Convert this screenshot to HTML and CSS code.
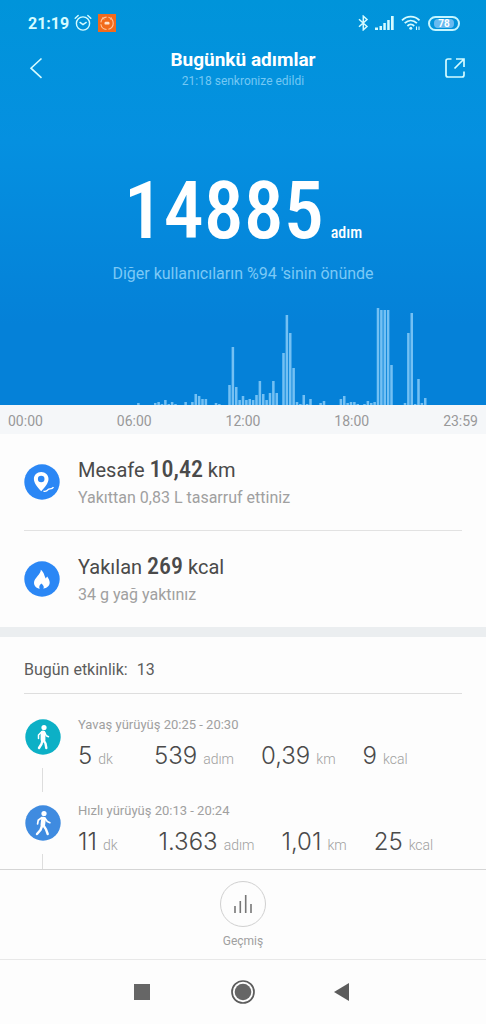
FILE: index.html
```html
<!DOCTYPE html>
<html lang="tr">
<head>
<meta charset="utf-8">
<meta name="viewport" content="width=device-width, initial-scale=1">
<title>Bugünkü adımlar</title>
<link rel="stylesheet" href="styles.css">
</head>
<body>
<div class="app">
  <section class="hero">
    <div class="status">
      <span class="clock">21:19</span>
      <svg class="alarm" width="18" height="18" viewBox="0 0 18 18" fill="none" stroke="currentColor" stroke-width="1.4" stroke-linecap="round"><circle cx="9" cy="9.5" r="6.6"/><path d="M1.2 4.2 4.2 1.5M16.8 4.2 13.8 1.5M6 8.4l3 2.2 3.2-2.2"/></svg>
      <svg width="18" height="18" viewBox="0 0 18 18" fill="none"><path fill="#f26a1b" d="M0 0h18v18H0z"/><circle cx="9" cy="9.3" r="6.2" stroke="#ffc49a" stroke-width="1.1" stroke-dasharray="8 2"/><rect x="6.500" y="7.800" width="5" height="2.800" rx="1.2" fill="#ffe3cf"/><path d="M4.500 3.500l1.500 2M13.500 3.500l-1 2" stroke="#ffc49a"/></svg>
      <span class="spacer"></span>
      <svg width="11" height="16" viewBox="0 0 11 16" fill="none" stroke="currentColor" stroke-width="1.500"><path d="M1 4.300 9 11.500 5.300 14.800V1.200L9 4.500 1 11.700"/></svg>
      <svg class="signal" width="19" height="14" viewBox="0 0 19 14" fill="currentColor"><path d="M0 11.500h3V14H0zM4.500 10H7v4H4.500zM8.300 7h2.500v7H8.300zM12.200 4h2.500v10h-2.500zM16 0h2.700v14H16z"/></svg>
      <svg class="wifi" width="20" height="16" viewBox="0 0 20 16" fill="none" stroke="currentColor" stroke-width="1.800"><path d="M1 5.300c5-5 12.500-5 17.500 0M3.700 8.200c3.700-3.500 8.500-3.500 12.200 0M6.400 11c2-2 4.800-2 6.800 0"/><circle cx="9.800" cy="13.300" r="1.500" fill="currentColor" stroke="none"/><path d="M15.500 11.500V15M18 11.500V15" stroke-width="1.100"/></svg>
      <span class="battery"><span class="level">78</span></span>
    </div>
    <header class="header">
      <button class="icon-btn" type="button" aria-label="Geri"><svg width="14" height="22" viewBox="0 0 14 22" fill="none" stroke="currentColor" stroke-width="1.600"><path d="M12.500 1.500 2 11.200l10.500 9.600"/></svg></button>
      <div class="titles"><h1>Bugünkü adımlar</h1><p>21:18 senkronize edildi</p></div>
      <button class="icon-btn right" type="button" aria-label="Paylaş"><svg width="22" height="22" viewBox="0 0 22 22" fill="none" stroke="currentColor" stroke-width="1.700"><path d="M7.500 2H4Q2 2 2 4v14q0 2 2 2h14q2 0 2-2v-3.500M12 2h8v8M20 2 10.500 11.500"/></svg></button>
    </header>
    <div class="total"><span class="count">14885</span><span class="unit">adım</span></div>
    <p class="rank">Diğer kullanıcıların %94 'sinin önünde</p>
    <svg class="chart" viewBox="0 0 144 97" preserveAspectRatio="none" role="img" aria-label="Günlük adım grafiği"><path d="M41 97v-2M46 97v-2M47 97v-3M48 97v-1M49 97v-5M50 97v-1M51 97v-3M52 97v-1M55 97v-3M57 97v-3M58 97v-11M59 97v-9M60 97v-6M61 97v-6M64 97v-2M65 97v-1M68 97v-20M69 97v-58M70 97v-18M71 97v-5M72 97v-9M73 97v-5M74 97v-6M75 97v-5M76 97v-10M77 97v-24M78 97v-11M79 97v-5M80 97v-12M81 97v-24M82 97v-12M84 97v-52M85 97v-90M86 97v-72M87 97v-37M88 97v-3M89 97v-1M90 97v-10M91 97v-1M92 97v-6M95 97v-2M96 97v-4M101 97v-6M102 97v-9M103 97v-2M104 97v-3M105 97v-3M106 97v-1M108 97v-1M109 97v-4M110 97v-2M111 97v-3M112 97v-97M113 97v-95M114 97v-95M115 97v-95M116 97v-40M120 97v-2M121 97v-72M122 97v-92M123 97v-1M124 97v-26M125 97v-2M126 97v-7"/></svg>
  </section>
  <div class="axis"><span>00:00</span><span>06:00</span><span>12:00</span><span>18:00</span><span>23:59</span></div>

  <section class="stats">
    <article class="stat">
      <svg class="badge" viewBox="0 0 36 36"><circle cx="18" cy="18" r="17.700" fill="#2b87f5"/><path fill="#fff" fill-rule="evenodd" d="M17.200 8c-4.200 0-7.300 3.100-7.300 7 0 4.200 3.700 8.200 7.300 12.300 3.600-4.100 7.300-8.100 7.300-12.300 0-3.900-3.100-7-7.300-7zm0 3.700a3.300 3.300 0 1 1 0 6.600 3.300 3.300 0 0 1 0-6.600z"/><path d="M19.500 27.300c2.500.4 3.700-.3 4.500-1.600 1.200-1.800 3.500.3 5.500-2.500" fill="none" stroke="#fff" stroke-width="1.400"/></svg>
      <div class="stat-text"><h2>Mesafe <b>10,42</b> km</h2><p>Yakıttan 0,83 L tasarruf ettiniz</p></div>
    </article>
    <article class="stat">
      <svg class="badge" viewBox="0 0 36 36"><circle cx="18" cy="18" r="17.700" fill="#2b87f5"/><path fill="#fff" d="M16.800 8.700c.5 4-6.800 8.300-6.800 13 0 3 2.200 5.500 5.900 6-1.500-2.200.1-4 1.500-5.200 1.400 1.300 3.300 3 1.900 5.200 3.900-.4 6.400-3 6.400-6.100 0-2.500-1.400-4.300-2.400-6.200-.8.600-1.200 1.300-1.500 2.100-1.500-2.300-1.500-6.200-5-8.800z"/></svg>
      <div class="stat-text"><h2>Yakılan <b>269</b> kcal</h2><p>34 g yağ yaktınız</p></div>
    </article>
  </section>

  <section class="activities">
    <h3>Bugün etkinlik: <span>13</span></h3>
    <ol>
      <li>
        <svg class="badge" viewBox="0 0 36 36"><circle cx="18" cy="18" r="17.700" fill="#0cb0c6"/><circle cx="19" cy="8.500" r="2.600" fill="#fff"/><path fill="none" stroke="#fff" stroke-linecap="round" d="M18 14v7" stroke-width="4.800"/><path fill="none" stroke="#fff" stroke-width="2.400" stroke-linecap="round" stroke-linejoin="round" d="M17.500 21l-1 4-2.500 4M18.500 21l2 3.500.8 4.500"/><path fill="none" stroke="#fff" stroke-width="1.500" stroke-linecap="round" stroke-linejoin="round" d="M16.500 13l-3 3v3.500M19.500 13l1.800 3.800 2.200 1"/></svg>
        <div class="detail"><p>Yavaş yürüyüş 20:25 - 20:30</p>
        <div class="metrics"><span><b>5</b>dk</span><span><b>539</b>adım</span><span><b>0,39</b>km</span><span><b>9</b>kcal</span></div></div>
      </li>
      <li>
        <svg class="badge" viewBox="0 0 36 36"><circle cx="18" cy="18" r="17.700" fill="#3f8be0"/><circle cx="19" cy="8.500" r="2.600" fill="#fff"/><path fill="none" stroke="#fff" stroke-linecap="round" d="M18.500 14l-.7 6" stroke-width="4.600"/><path fill="none" stroke="#fff" stroke-width="2.400" stroke-linecap="round" stroke-linejoin="round" d="M17 21l-1.500 4-3.500 4M18.500 20.500l2.500 3.800 1.700 4.700"/><path fill="none" stroke="#fff" stroke-width="1.700" stroke-linecap="round" stroke-linejoin="round" d="M17 12.500l-3.800 2.800-.6 3.500M19.800 13l2.500 3.500 2.600 1.200"/></svg>
        <div class="detail"><p>Hızlı yürüyüş 20:13 - 20:24</p>
        <div class="metrics"><span><b>11</b>dk</span><span><b>1.363</b>adım</span><span><b>1,01</b>km</span><span><b>25</b>kcal</span></div></div>
      </li>
    </ol>
  </section>

  <footer class="history">
    <button type="button"><span class="ring"><svg width="20" height="20" viewBox="0 0 20 20" fill="none" stroke="#777" stroke-width="1.600"><path d="M2 19v-7M7.300 19V7M12.700 19V1M18 19v-9"/></svg></span>Geçmiş</button>
  </footer>
  <nav class="system">
    <button type="button" aria-label="Son uygulamalar"><svg width="24" height="24" viewBox="0 0 24 24"><path fill="#666" d="M3 4h16v16H3z"/></svg></button>
    <button type="button" aria-label="Ana ekran"><svg width="24" height="24" viewBox="0 0 24 24"><circle cx="12" cy="12" r="11" fill="none" stroke="#5c5c5c" stroke-width="1.700"/><circle cx="12" cy="12" r="8.300" fill="#666"/></svg></button>
    <button type="button" aria-label="Geri"><svg width="24" height="24" viewBox="0 0 24 24"><path fill="#5c5c5c" d="M3 12 18 3v18z"/></svg></button>
  </nav>
</div>
</body>
</html>
```
FILE: styles.css
```css
* { box-sizing: border-box; }
body, h1, h2, h3, p, ol { margin: 0; padding: 0; }
body { font-family: Roboto, "Noto Sans", sans-serif; color: #4a4a4a; background: #fdfdfd; }
button { border: 0; padding: 0; background: none; color: inherit; font: inherit; }
svg { display: block; flex: none; }

.app { display: flex; flex-direction: column; min-height: 100vh; }

.hero { flex: none; background: linear-gradient(#0094da, #0590e0 35%, #0581d8 80%); color: #fff; }
.status { display: flex; align-items: center; height: 46px; padding: 0 26px 0 28px; color: #d5fbff; }
.clock { font-size: 16px; font-weight: 700; }
.alarm { margin: 0 6px 0 5px; }
.spacer { flex: 1; }
.signal { margin: 0 7px 0 6px; }
.wifi { margin-right: 7px; }
.battery { width: 32px; height: 15px; padding: 1px; border: 2px solid #c4f5ff; border-radius: 8px; }
.level { display: block; width: 20px; margin: 0 auto; border-radius: 4px; background: #68baf0; color: #fff; font-size: 10px; font-weight: 700; line-height: 9px; text-align: center; }

.header { display: grid; grid-template-columns: 36px 1fr 36px; align-items: center; height: 44px; padding: 0 20px; }
.icon-btn { display: flex; width: 32px; padding-left: 9px; color: #d5fbff; }
.right { justify-self: end; justify-content: flex-end; padding: 0; }
.titles { text-align: center; }
.titles h1 { font-size: 19px; font-weight: 700; line-height: 25px; }
.titles p { color: #74c8f4; font-size: 12px; line-height: 18px; }

.total { display: flex; justify-content: center; align-items: baseline; gap: 7px; margin-top: 73px; font-family: "Roboto Condensed", "Liberation Sans Narrow", Roboto, sans-serif; font-weight: 500; }
.count { font-size: 80px; line-height: 96px; }
.unit { font-size: 16px; line-height: 20px; }
.rank { margin-top: 5px; text-align: center; color: #7cc9f6; font-size: 16px; line-height: 20px; }
.chart { width: 100%; height: 97px; margin-top: 24px; fill: none; stroke: #74c0f3; stroke-width: .75; }

.axis { flex: none; display: flex; justify-content: space-between; height: 29px; padding: 0 8px; background: #f5f7f9; color: #999; font-size: 14px; line-height: 32px; }

.badge { width: 36px; height: 36px; }
.stats { flex: none; padding: 0 24px; border-bottom: 10px solid #ebeef0; }
.stat { display: flex; align-items: center; gap: 18px; height: 96px; }
.stat + .stat { border-top: 1px solid #e2e2e2; height: 97px; }
.stat-text { padding-top: 4px; }
.stat h2 { font-size: 20px; font-weight: 400; line-height: 28px; }
.stat b { font-family: "Roboto Condensed", "Liberation Sans Narrow", Roboto, sans-serif; font-size: 24px; font-weight: 500; line-height: 24px; }
.stat p { color: #a0a0a0; font-size: 16px; line-height: 28px; }

.activities { flex: 1; padding: 0 24px; }
.activities h3 { height: 57px; border-bottom: 1px solid #dedede; color: #5c5c5c; font-size: 16px; font-weight: 400; line-height: 66px; }
.activities h3 span { margin-left: 5px; }
.activities ol { list-style: none; padding-top: 22px; }
.activities li { display: grid; grid-template: 52px 24px / 38px 1fr; column-gap: 16px; height: 86px; }
.activities li:last-child { grid-template-rows: 52px 15px; height: 67px; }
.activities li > .badge { margin: 3px 0 0 1px; }
.activities li::after { content: ""; width: 1px; margin-left: 18px; background: #ddd; }
.detail { grid-column: 2; grid-row: 1 / span 2; }
.detail p { color: #a0a0a0; font-size: 13px; line-height: 18px; }
.metrics { display: flex; gap: 27px; color: #a0a0a0; font-size: 14px; font-weight: 300; line-height: 44px; }
.metrics span:first-child { margin-right: 14px; }
.metrics b { margin-right: 6px; color: #4a4a4a; font-family: Inter, Roboto, sans-serif; font-size: 24px; font-weight: 300; }

.history { flex: none; display: flex; justify-content: center; height: 90px; padding-top: 11px; border-top: 1px solid #d5d5d5; }
.history button { display: flex; flex-direction: column; align-items: center; gap: 5px; color: #a0a0a0; font-size: 12px; line-height: 18px; }
.ring { display: grid; place-items: center; width: 46px; height: 46px; border: 1px solid #d0d0d0; border-radius: 50%; }
.system { flex: none; display: flex; justify-content: center; gap: 76px; height: 65px; border-top: 1px solid #e8e8e8; }
```
